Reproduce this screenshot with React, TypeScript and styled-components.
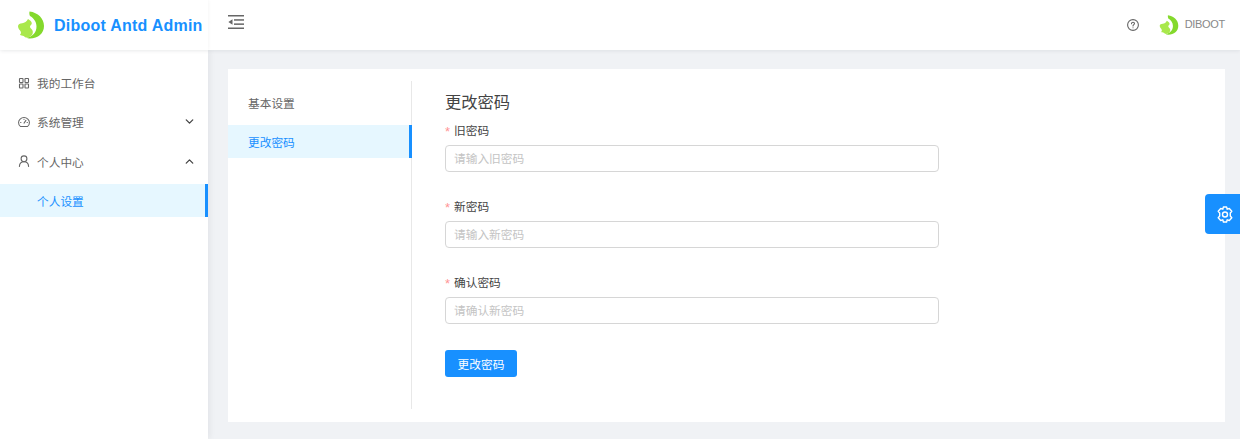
import React from "react";
import styled, { createGlobalStyle } from "styled-components";
import { ChevronDown, ChevronUp } from "lucide-react";

const Global = createGlobalStyle`
  html, body { margin: 0; padding: 0; background: #f0f2f5; }
  body { font-family: "Liberation Sans", "Noto Sans CJK SC", sans-serif; }
  * { box-sizing: border-box; }
`;

const Page = styled.div`
  width: 1240px; height: 439px; display: flex; flex-direction: column; overflow: hidden; position: relative;
`;
const Header = styled.header`
  height: 50px; flex: none; background: #fff; display: flex; align-items: center;
  box-shadow: 0 1px 4px rgba(0, 21, 41, 0.08); position: relative; z-index: 2;
`;
const Brand = styled.div`
  width: 208px; height: 50px; flex: none; display: flex; align-items: center; padding-left: 17px; gap: 9px;
  box-shadow: 1px 0 3px rgba(0, 21, 41, 0.03);
`;
const BrandName = styled.span`
  font-size: 16px; font-weight: 700; color: #1890ff; white-space: nowrap; letter-spacing: 0.24px;
  margin-top: 1px;
`;
const Collapse = styled.button`
  border: 0; background: none; padding: 0; margin: -7px 0 0 20px; width: 16px; height: 14px; display: flex; color: #666;
`;
const HeaderRight = styled.div`
  margin-left: auto; display: flex; align-items: center; padding-right: 15px; color: #777; font-size: 12px;
`;
const Help = styled.span`
  display: flex; margin-right: 20px; color: #666;
`;
const User = styled.span`
  margin-left: 6px; margin-top: -2px; color: #888; font-size: 11px; letter-spacing: -0.3px;
`;
const Body = styled.div`
  flex: 1; display: flex; min-height: 0;
`;
const Sider = styled.aside`
  width: 208px; flex: none; background: #fff; padding-top: 16px; box-shadow: 2px 0 6px rgba(0, 21, 41, 0.06);
`;
const MenuRow = styled.div<{ $active?: boolean; $sub?: boolean }>`
  height: 33px; margin-bottom: 6.3px; display: flex; align-items: center; font-size: 11.7px;
  padding-left: ${(p) => (p.$sub ? 37 : 18)}px; padding-right: 12px;
  color: ${(p) => (p.$active ? "#1890ff" : "#666")};
  background: ${(p) => (p.$active ? "#e6f7ff" : "transparent")};
  border-right: ${(p) => (p.$active ? "3px solid #1890ff" : "0")};
`;
const MenuIcon = styled.span`
  width: 12px; height: 12px; display: flex; margin-right: 7px; color: #666;
`;
const Caret = styled.span`
  margin-left: auto; display: flex; color: #444;
`;
const Main = styled.main`
  flex: 1; padding: 19px 15px 17px 20px; min-width: 0;
`;
const Card = styled.section`
  height: 353px; background: #fff; padding: 12px 0 13px; display: flex;
`;
const SideTabs = styled.nav`
  width: 184px; flex: none; border-right: 1px solid #e8e8e8; padding-top: 5px;
`;
const TabItem = styled.div<{ $active?: boolean }>`
  height: 33px; margin-bottom: 6px; display: flex; align-items: center; padding-left: 20px; font-size: 11.7px;
  color: ${(p) => (p.$active ? "#1890ff" : "#666")};
  background: ${(p) => (p.$active ? "#e6f7ff" : "transparent")};
  margin-right: -1px;
  border-right: ${(p) => (p.$active ? "3px solid #1890ff" : "0")};
`;
const Content = styled.div`
  padding: 11px 0 0 33px; width: 528px;
`;
const Title = styled.h2`
  margin: 0; font-size: 16.3px; font-weight: 400; line-height: 20px; color: #444;
`;
const Field = styled.div`
  margin-top: 7px; margin-bottom: 23px;
`;
const Label = styled.label`
  display: flex; align-items: center; height: 20px; font-size: 11.7px; color: #444; margin-bottom: 6px;
`;
const Star = styled.span`
  color: #ff4d4f; margin: 4px 3px 0 0; font-size: 13px; width: 6px; opacity: 0.6;
`;
const Input = styled.input`
  display: block; width: 494px; height: 27px; border: 1px solid #d6d6d6; border-radius: 4px; padding: 0 9px 0 8px;
  font-family: inherit; font-size: 11.7px; background: #fff; outline: none;
  &::placeholder { color: #c4c4c4; opacity: 1; }
`;
const Submit = styled.button`
  width: 72px; height: 27px; margin-top: 26px; border: 0; border-radius: 3px; background: #1890ff; color: #fff;
  font-family: inherit; font-size: 11.7px; padding: 0; display: block;
`;
const SettingsTab = styled.div`
  position: absolute; right: 0; top: 194px; width: 35px; height: 40px; background: #1890ff;
  border-radius: 4px 0 0 4px; display: flex; align-items: center; justify-content: center; padding-left: 5px; z-index: 3;
`;

const Logo = ({ size }: { size: number }) => (
  <svg width={size} height={size} viewBox="0 0 28 28" fill="none">
    <path d="M12.5 0.5C21 1.5 27 7.5 27 15C27 22.5 21 27.5 13 27.5C11.5 27.5 10.2 27.2 9.5 26.8C15.5 25.8 19.5 21.5 19.5 15.5C19.5 10.5 16.5 7 13 5C12.3 3.5 12.2 2 12.5 0.5Z" fill="#84d92c" />
    <path d="M11 8C13 9 15 10.8 14.8 12.6C14.6 14.2 12.8 14.6 13 16C13.3 17.6 15.6 18 15.8 20.8C16 24 13.4 26.6 10 26.6C8 26.6 7.6 25.4 6.6 25C5.6 24.6 3.6 25 3 23.6C3.8 23 4.2 22 3.8 20.8C3.2 19 1 18 1 15.2C1 13.2 3 12.4 5.2 12.2C7.6 12 9.7 10.6 11 8Z" fill="#a9e84b" />
  </svg>
);

const CollapseIcon = () => (
  <svg width="16" height="14" viewBox="0 0 16 14" fill="currentColor">
    <rect x="0" y="0" width="16" height="1.5" />
    <rect x="6" y="4.2" width="10" height="1.5" />
    <rect x="6" y="8.4" width="10" height="1.5" />
    <rect x="0" y="12.5" width="16" height="1.5" />
    <path d="M0.4 7 L4.5 4.2 V9.8 Z" />
  </svg>
);

const GridIcon = () => (
  <svg width="12" height="12" viewBox="0 0 12 12" fill="none" stroke="currentColor" strokeWidth="1.1">
    <rect x="1.5" y="1.5" width="3.5" height="4" rx="0.5" />
    <rect x="7" y="1.5" width="3.5" height="4" rx="0.5" />
    <rect x="1.5" y="7" width="3.5" height="4" rx="0.5" />
    <rect x="7" y="7" width="3.5" height="4" rx="0.5" />
  </svg>
);

const GaugeIcon = () => (
  <svg width="13" height="12" viewBox="0 0 13 12" fill="none" stroke="currentColor" strokeWidth="1.1" strokeLinecap="round">
    <path d="M2.6 10.8C1.2 9.8.6 8.2.6 6.6A5.9 5.4 0 0 1 12.4 6.6C12.4 8.2 11.8 9.8 10.4 10.8Z" />
    <path d="M6.5 7.2L8.6 4.2" />
    <path d="M2.8 6.5H3.2M9.8 6.5H10.2M6.5 3V3.4" />
  </svg>
);

const UserIcon = () => (
  <svg width="12" height="12" viewBox="0 0 12 12" fill="none" stroke="currentColor" strokeWidth="1.1" strokeLinecap="round">
    <circle cx="6" cy="3.8" r="2.9" />
    <path d="M1.4 11.4C1.6 8.6 3.4 6.8 6 6.8S10.4 8.6 10.6 11.4" />
  </svg>
);

const HelpIcon = () => (
  <svg width="12" height="12" viewBox="0 0 12 12" fill="none" stroke="currentColor" strokeWidth="1.1" strokeLinecap="round">
    <circle cx="6" cy="6" r="5.4" />
    <path d="M4.5 4.7C4.5 3.8 5.2 3.2 6 3.2S7.5 3.8 7.5 4.6C7.5 5.6 6 5.7 6 6.9" />
    <path d="M6 8.7V8.8" />
  </svg>
);

const GearIcon = () => (
  <svg width="16" height="17" viewBox="0 0 16 17" fill="none" stroke="#fff" strokeWidth="1.4" strokeLinejoin="round">
    <path d="M6.4 1H9.6L10.2 3.2L12.3 2.5L14.8 5.2L13.3 7L13.3 10L14.8 11.8L12.3 14.5L10.2 13.8L9.6 16H6.4L5.8 13.8L3.7 14.5L1.2 11.8L2.7 10L2.7 7L1.2 5.2L3.7 2.5L5.8 3.2Z" />
    <circle cx="8" cy="8.5" r="2.5" />
  </svg>
);

const fields = [
  { label: "旧密码", placeholder: "请输入旧密码" },
  { label: "新密码", placeholder: "请输入新密码" },
  { label: "确认密码", placeholder: "请确认新密码" },
];

export default function App() {
  return (
    <Page>
      <Global />
      <Header>
        <Brand>
          <Logo size={28} />
          <BrandName>Diboot Antd Admin</BrandName>
        </Brand>
        <Collapse aria-label="collapse"><CollapseIcon /></Collapse>
        <HeaderRight>
          <Help><HelpIcon /></Help>
          <Logo size={20} />
          <User>DIBOOT</User>
        </HeaderRight>
      </Header>
      <Body>
        <Sider>
          <MenuRow><MenuIcon><GridIcon /></MenuIcon>我的工作台</MenuRow>
          <MenuRow><MenuIcon><GaugeIcon /></MenuIcon>系统管理<Caret><ChevronDown size={13} strokeWidth={2.4} /></Caret></MenuRow>
          <MenuRow><MenuIcon><UserIcon /></MenuIcon>个人中心<Caret><ChevronUp size={13} strokeWidth={2.4} /></Caret></MenuRow>
          <MenuRow $sub $active>个人设置</MenuRow>
        </Sider>
        <Main>
          <Card>
            <SideTabs>
              <TabItem>基本设置</TabItem>
              <TabItem $active>更改密码</TabItem>
            </SideTabs>
            <Content>
              <Title>更改密码</Title>
              {fields.map((f) => (
                <Field key={f.label}>
                  <Label><Star>*</Star>{f.label}</Label>
                  <Input placeholder={f.placeholder} />
                </Field>
              ))}
              <Submit>更改密码</Submit>
            </Content>
          </Card>
        </Main>
      </Body>
      <SettingsTab><GearIcon /></SettingsTab>
    </Page>
  );
}
